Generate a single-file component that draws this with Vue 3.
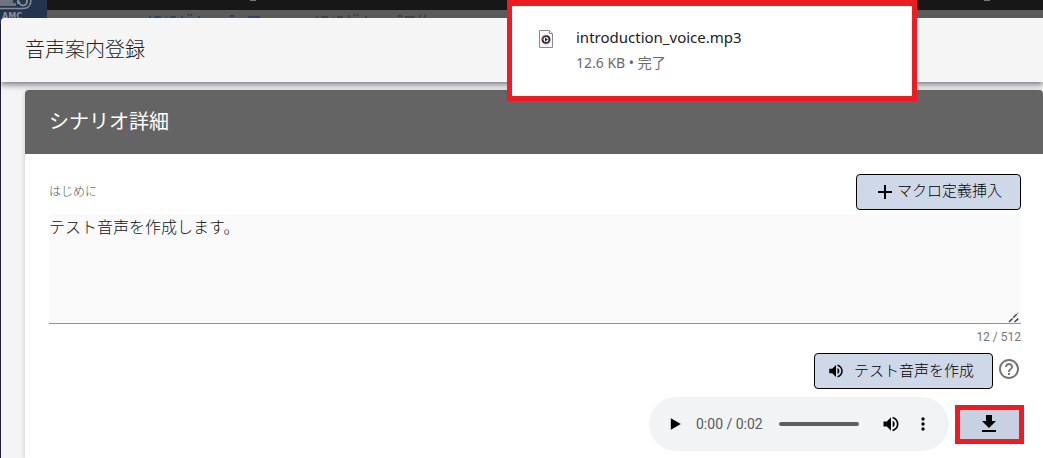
<script setup>
import { ref, computed } from 'vue'
const text = ref('テスト音声を作成します。')
const count = computed(() => text.value.length)
</script>

<template>
  <div class="page">
    <div class="backdrop" aria-hidden="true">
      <div class="topbar"><i class="tick a"></i><i class="tick b"></i></div>
      <svg class="crumbs" width="300" height="8" viewBox="0 0 300 8">
        <path d="M2 7H4M7 7H14M19 7H20M23 7H29M35 6V8M41 4L42 6M44 4L45 6M51 7H53M83 7C84 5 86 5 87 7M101 7H113" fill="none" stroke="#263f60" stroke-width="1.5" />
        <path d="M169 7H171M174 7H181M186 7H187M190 7H196M202 5V8M207 4L208 6M210 4L211 6M218 7H220M251 7C252 5 254 5 255 7M258 7H268M272 7L274 5M277 7L279 5" fill="none" stroke="#3d3d3d" stroke-width="1.5" />
      </svg>
      <div class="brand">
        <svg width="47" height="11" viewBox="0 0 47 11">
          <path d="M0 0H13V3H16V6H0Z" fill="#6e747f" />
          <path d="M0 8.500H23C28 8.500 31 5 31 0" fill="none" stroke="#858b96" stroke-width="1.500" />
          <path d="M18 0V4M19 1C19 7 27 7 27 1V0" fill="none" stroke="#858b96" stroke-width="2" />
        </svg>
        <span>AMC</span>
      </div>
    </div>

    <main class="dialog">
      <header class="dialog-head"><h1>音声案内登録</h1></header>
      <section class="card">
        <h2>シナリオ詳細</h2>
        <div class="body">
          <div class="label-row">
            <label for="intro">はじめに</label>
            <button class="btn macro" type="button">
              <svg width="24" height="24" viewBox="0 0 24 24"><path d="M19 13h-6v6h-2v-6H5v-2h6V5h2v6h6v2z" /></svg>
              マクロ定義挿入
            </button>
          </div>
          <div class="field">
            <textarea id="intro" v-model="text" maxlength="512"></textarea>
            <svg class="grip" width="12" height="12" viewBox="0 0 12 12"><path d="M1 11L10 2M6.500 11L11 7" stroke="#444" stroke-width="1.5" stroke-dasharray="5 1" /></svg>
          </div>
          <div class="count">{{ count }} / 512</div>
          <div class="make-row">
            <button class="btn make" type="button">
              <svg width="18" height="18" viewBox="0 0 24 24"><path d="M3 9v6h4l5 5V4L7 9H3zm13.500 3c0-1.770-1.020-3.290-2.500-4.030v8.050c1.480-.73 2.500-2.250 2.500-4.020zM14 3.230v2.060c2.890.86 5 3.540 5 6.710s-2.110 5.850-5 6.710v2.060c4.010-.91 7-4.490 7-8.770s-2.990-7.860-7-8.770z" /></svg>
              テスト音声を作成
            </button>
            <button class="plain help" type="button" aria-label="ヘルプ">
              <svg width="24" height="24" viewBox="0 0 24 24"><path d="M11 18h2v-2h-2v2zm1-16C6.480 2 2 6.480 2 12s4.480 10 10 10 10-4.480 10-10S17.520 2 12 2zm0 18c-4.410 0-8-3.590-8-8s3.590-8 8-8 8 3.590 8 8-3.590 8-8 8zm0-14c-2.210 0-4 1.790-4 4h2c0-1.100.9-2 2-2s2 .9 2 2c0 2-3 1.750-3 5h2c0-2.250 3-2.500 3-5 0-2.210-1.790-4-4-4z" /></svg>
            </button>
          </div>
          <div class="play-row">
            <div class="player">
              <button class="plain play" type="button" aria-label="再生"><svg width="20" height="20" viewBox="0 0 24 24"><path d="M7 5v14l12-7z" /></svg></button>
              <span class="time">0:00 / 0:02</span>
              <input class="seek" type="range" min="0" max="2" value="0" aria-label="再生位置" />
              <button class="plain" type="button" aria-label="音量"><svg width="20" height="20" viewBox="0 0 24 24"><path d="M3 9v6h4l5 5V4L7 9H3zm13.500 3c0-1.770-1.020-3.290-2.500-4.030v8.050c1.480-.73 2.500-2.250 2.500-4.020zM14 3.230v2.060c2.890.86 5 3.540 5 6.710s-2.110 5.850-5 6.710v2.060c4.010-.91 7-4.490 7-8.770s-2.990-7.860-7-8.770z" /></svg></button>
              <button class="plain" type="button" aria-label="メニュー"><svg width="20" height="20" viewBox="0 0 24 24"><path d="M12 8a2 2 0 1 0 0-4 2 2 0 0 0 0 4zm0 2a2 2 0 1 0 0 4 2 2 0 0 0 0-4zm0 6a2 2 0 1 0 0 4 2 2 0 0 0 0-4z" /></svg></button>
            </div>
            <button class="download" type="button" aria-label="ダウンロード">
              <svg width="24" height="24" viewBox="0 0 24 24"><path d="M19 9h-4V3H9v6H5l7 7 7-7zM5 18v2h14v-2H5z" /></svg>
            </button>
          </div>
        </div>
      </section>
    </main>

    <aside class="toast">
      <svg width="14" height="18" viewBox="0 0 14 18">
        <path d="M.5.5H10.500L13.500 3.500V17.500H.5Z" fill="#f7f7f7" stroke="#8b8b8b" />
        <path d="M10.500.5V3.500H13.500" fill="#fff" stroke="#8b8b8b" />
        <circle cx="7" cy="9.500" r="3.500" fill="#fff" stroke="#35253a" stroke-width="2" />
        <path d="M2.800 10A4.200 4.200 0 0 1 8 5.300" fill="none" stroke="#e8793a" />
        <path d="M11 11A4.200 4.200 0 0 1 5 13.300" fill="none" stroke="#8a5bb0" />
        <path d="M6 7.500V11.500L9 9.500Z" fill="#222" />
      </svg>
      <div>
        <a class="file" href="#">introduction_voice.mp3</a>
        <div class="meta">12.6 KB • 完了</div>
      </div>
    </aside>
  </div>
</template>

<style>
body { margin: 0; overflow: hidden; background: #1a2030; }
</style>

<style scoped>
* { box-sizing: border-box; }
.page {
  position: relative;
  min-height: 100vh;
  overflow: hidden;
  padding: 18px 0 0 1px;
  font-family: Roboto, "Noto Sans CJK JP", sans-serif;
  color: #212121;
}
.backdrop { position: absolute; top: 0; left: 0; right: 0; height: 24px; overflow: hidden; background: #5b5b5b; }
.topbar { height: 10px; background: #171717; }
.tick { position: absolute; top: 0; width: 6px; height: 1px; background: #777; }
.tick.a { left: 250px; }
.tick.b { right: 53px; }
.crumbs { display: block; margin-left: 147px; }
.brand { position: absolute; left: 0; top: 0; width: 47px; height: 24px; background: #24344f; }
.brand svg { display: block; }
.brand span { display: block; padding-left: 2px; font: 700 8px/12px "DejaVu Sans", sans-serif; color: #8c8f96; }
.dialog { position: relative; min-height: calc(100vh - 18px); overflow: hidden; border-radius: 4px 0 0 0; background: #f4f4f4; }
.dialog-head {
  position: relative;
  height: 64px;
  padding: 0 24px;
  background: #f5f5f5;
  box-shadow: 0 2px 4px -1px #0003, 0 4px 5px #0024, 0 1px 10px #0000001f;
}
h1, h2 { margin: 0; font-size: 20px; line-height: 64px; font-weight: 300; }
.card { margin: 8px 0 0 24px; min-height: calc(100vh - 90px); border-radius: 4px 4px 0 0; background: #fff; box-shadow: 0 1px 5px #0003; }
h2 { padding: 0 24px; border-radius: 4px 4px 0 0; background: #646464; color: #fff; font-weight: 400; }
.body { padding: 20px 22px 0 24px; }
.label-row { display: flex; justify-content: space-between; height: 40px; }
label { font-size: 12px; line-height: 36px; font-weight: 300; color: #555; }
.btn {
  display: flex;
  align-items: center;
  height: 36px;
  border: 1px solid #000;
  border-radius: 4px;
  background: #cfd8e9;
  color: #000;
  font: 300 15px/20px Roboto, "Noto Sans CJK JP", sans-serif;
}
.macro { padding: 0 18px 2px 16px; }
.macro svg { margin-top: 2px; }
.make { gap: 9px; padding: 0 18px 0 12px; }
.field { position: relative; height: 110px; border-bottom: 1px solid #949494; background: #fafafa; }
textarea {
  display: block;
  width: 100%;
  height: 109px;
  padding: 0;
  border: 0;
  outline: 0;
  resize: none;
  background: transparent;
  color: #111;
  font: 300 16px/28px Roboto, "Noto Sans CJK JP", sans-serif;
}
.grip { position: absolute; right: 1px; bottom: 0; }
.count { padding-top: 3px; text-align: right; font-size: 12px; line-height: 20px; color: #757575; }
.make-row { display: flex; justify-content: flex-end; align-items: center; height: 36px; margin-top: 6px; }
.plain { display: flex; padding: 0; border: 0; background: none; }
.help { margin: -4px 0 0 4px; fill: #757575; }
.play-row { display: flex; justify-content: flex-end; align-items: center; margin: 8px -3px 0 0; }
.player { display: flex; align-items: center; width: 300px; height: 54px; padding: 0 16px; border-radius: 27px; background: #f1f3f4; }
.time { margin: 0 16px 0 11px; font-size: 14px; line-height: 20px; color: #5a5a5a; white-space: nowrap; }
.seek { appearance: none; flex: 1; min-width: 0; height: 4px; margin: 0 22px 0 0; border-radius: 2px; background: #5f5f5f; }
.seek::-webkit-slider-thumb { appearance: none; width: 0; height: 0; }
.player .plain + .plain { margin-left: 12px; }
.download { display: flex; align-items: center; justify-content: center; width: 69px; height: 39px; margin-left: 6px; padding: 0 1px 0 0; border: 5px solid #ed1c24; background: #c8d1e1; }
.toast {
  position: absolute;
  top: 0;
  left: 507px;
  display: flex;
  gap: 23px;
  width: 410px;
  height: 101px;
  padding: 22px 27px;
  border: 5px solid #ed1c24;
  border-top-width: 6px;
  background: #fff;
}
.toast svg { margin-top: 2px; }
.file { display: block; color: #202124; text-decoration: none; }
.file, .meta { font-family: "Noto Sans", "Noto Sans CJK JP", sans-serif; }
.file { font-size: 15px; line-height: 18px; }
.meta { margin-top: 7px; font-size: 14px; line-height: 20px; color: #6a6a6a; }
</style>
